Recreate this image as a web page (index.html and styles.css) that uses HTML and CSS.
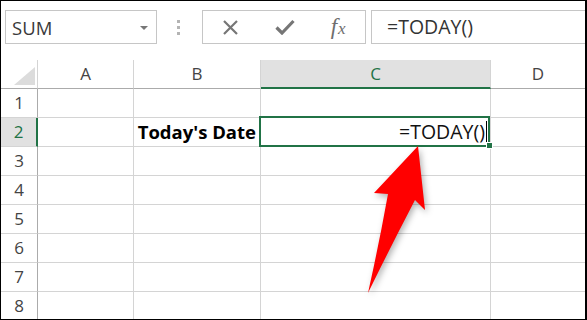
FILE: index.html
```html
<!DOCTYPE html>
<html lang="en">
<head>
    <meta charset="UTF-8">
    <meta name="viewport" content="width=device-width, initial-scale=1.0">
    <title>TODAY function</title>
    <link rel="stylesheet" href="styles.css">
</head>
<body>
    <div class="frame">
        <!-- Formula bar -->
        <div class="toolbar">
            <div class="name-box">
                <span>SUM</span>
                <span class="drop"></span>
            </div>
            <div class="dots"><i></i><i></i><i></i></div>
            <div class="fx-box">
                <span class="btn">
                    <svg width="17" height="17" viewBox="0 0 17 17"><path d="M2 2 L15 15 M15 2 L2 15" stroke="#767676" stroke-width="2.2" fill="none"/></svg>
                </span>
                <span class="btn">
                    <svg width="20" height="16" viewBox="0 0 20 16"><path d="M1.5 8.5 L7 14 L18.5 2" stroke="#767676" stroke-width="3.2" fill="none"/></svg>
                </span>
                <span class="btn fx"><i>f</i><i class="x">x</i></span>
            </div>
            <div class="formula">=TODAY()</div>
        </div>

        <!-- Sheet grid -->
        <div class="sheet">
            <div class="cell corner"><span class="tri"></span></div>
            <div class="cell col-head">A</div>
            <div class="cell col-head">B</div>
            <div class="cell col-head active">C</div>
            <div class="cell col-head last">D</div>

            <div class="cell row-head">1</div>
            <div class="cell"></div><div class="cell"></div><div class="cell"></div><div class="cell last"></div>

            <div class="cell row-head active">2</div>
            <div class="cell"></div>
            <div class="cell label">Today's Date</div>
            <div class="cell selected">=TODAY()<span class="caret"></span><span class="outline"></span><span class="handle"></span></div>
            <div class="cell last"></div>

            <div class="cell row-head">3</div>
            <div class="cell"></div><div class="cell"></div><div class="cell"></div><div class="cell last"></div>
            <div class="cell row-head">4</div>
            <div class="cell"></div><div class="cell"></div><div class="cell"></div><div class="cell last"></div>
            <div class="cell row-head">5</div>
            <div class="cell"></div><div class="cell"></div><div class="cell"></div><div class="cell last"></div>
            <div class="cell row-head">6</div>
            <div class="cell"></div><div class="cell"></div><div class="cell"></div><div class="cell last"></div>
            <div class="cell row-head">7</div>
            <div class="cell"></div><div class="cell"></div><div class="cell"></div><div class="cell last"></div>
            <div class="cell row-head">8</div>
            <div class="cell"></div><div class="cell"></div><div class="cell"></div><div class="cell last"></div>
        </div>

        <!-- Red arrow -->
        <svg class="arrow" width="585" height="318" viewBox="0 0 585 318">
            <path d="M417 145 L373 192 L387 193 Q378 243 367 292 Q391 243 414 199 L424 209 Z" fill="#ff0000"/>
        </svg>
    </div>
</body>
</html>
```

FILE: styles.css
```css
/* Base */
body {
    margin: 0;
    background: #000;
    font-family: 'Open Sans', 'Noto Sans', sans-serif;
    color: #444;
}

.frame {
    position: relative;
    margin: 1px 2px 1px 1px;
    height: 318px;
    background: #fff;
    overflow: hidden;
}

/* Formula bar */
.toolbar {
    display: flex;
    align-items: flex-start;
    height: 59px;
    padding: 9px 0 0 4px;
    box-sizing: border-box;
}

.name-box {
    display: flex;
    align-items: center;
    justify-content: space-between;
    width: 152px;
    height: 34px;
    padding: 0 8px 0 6px;
    box-sizing: border-box;
    border: 1px solid #c6c6c6;
    font-size: 18.5px;
    color: #3a3a3a;
}

.name-box .drop {
    width: 0;
    height: 0;
    border-left: 4px solid transparent;
    border-right: 4px solid transparent;
    border-top: 4px solid #777;
    margin-top: 1px;
}

.dots {
    display: flex;
    flex-direction: column;
    gap: 3px;
    margin: 10px 0 0 20px;
}

.dots i {
    display: block;
    width: 3px;
    height: 3px;
    background: #b4b4b4;
}

.fx-box {
    display: flex;
    align-items: center;
    width: 164px;
    height: 34px;
    margin-left: 22px;
    padding-left: 1px;
    box-sizing: border-box;
    border: 1px solid #c6c6c6;
}

.fx-box .btn {
    display: flex;
    align-items: center;
    justify-content: center;
    width: 54px;
    height: 100%;
}

.fx-box .fx {
    font-family: 'Liberation Serif', serif;
    font-size: 23px;
    color: #6e6e6e;
}

.fx-box .fx .x {
    font-size: 17px;
    margin-left: 1px;
    margin-top: 4px;
}

.formula {
    flex: 1;
    height: 34px;
    line-height: 32px;
    margin: 0 -1px 0 5px;
    padding-left: 15px;
    box-sizing: border-box;
    border: 1px solid #c6c6c6;
    font-size: 19.5px;
    color: #333;
}

/* Sheet */
.sheet {
    display: grid;
    grid-template-columns: 37px 96px 127px 230px 1fr;
    grid-auto-rows: 29px;
}

.cell {
    position: relative;
    box-sizing: border-box;
    border-right: 1px solid #d4d4d4;
    border-bottom: 1px solid #d4d4d4;
    font-size: 17px;
    line-height: 28px;
}

.cell.last {
    border-right: none;
}

.corner,
.col-head {
    border-bottom-color: #ababab;
    text-align: center;
    color: #444;
}

.corner .tri {
    position: absolute;
    right: 2px;
    bottom: 3px;
    width: 0;
    height: 0;
    border-left: 21px solid transparent;
    border-bottom: 18px solid #dcdcdc;
}

.col-head.active {
    background: #e1e1e1;
    border-bottom: 2px solid #217346;
    color: #217346;
}

.row-head {
    border-right-color: #ababab;
    text-align: center;
    color: #444;
}

.row-head.active {
    background: #e1e1e1;
    border-right: 2px solid #217346;
    color: #217346;
}

.label {
    text-align: right;
    padding-right: 4px;
    font-size: 18.5px;
    font-weight: bold;
    color: #000;
}

.selected {
    text-align: right;
    padding-right: 5px;
    font-size: 19.5px;
    color: #111;
}

.selected .outline {
    position: absolute;
    left: -2px;
    top: -2px;
    right: 0;
    bottom: -1px;
    border: 2px solid #217346;
}

.selected .caret {
    position: absolute;
    right: 3px;
    top: 3px;
    width: 1px;
    height: 22px;
    background: #000;
}

.selected .handle {
    position: absolute;
    right: -3px;
    bottom: -3px;
    width: 5px;
    height: 5px;
    background: #217346;
    border: 1px solid #fff;
    z-index: 1;
}

/* Arrow */
.arrow {
    position: absolute;
    left: 0;
    top: 0;
    pointer-events: none;
    filter: drop-shadow(2px 3px 3px rgba(0, 0, 0, 0.3));
}
```
